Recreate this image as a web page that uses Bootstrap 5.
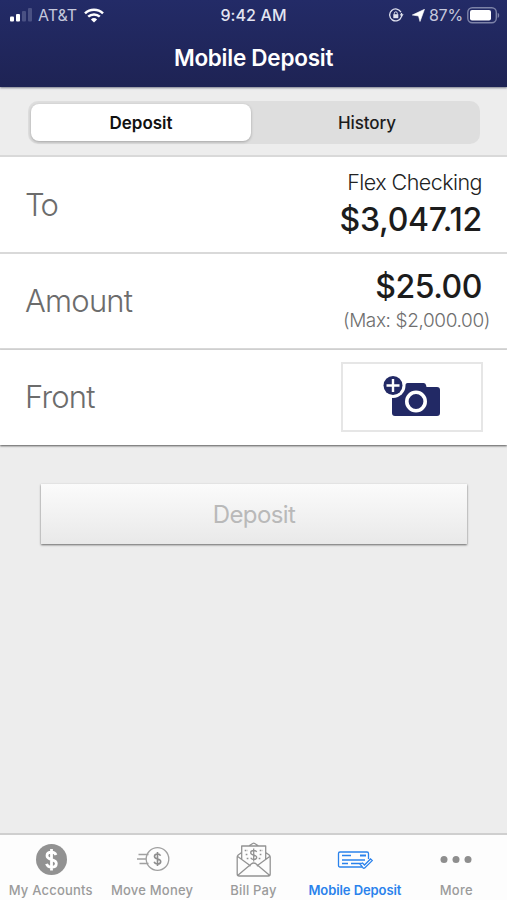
<!DOCTYPE html>
<html lang="en">
<head>
<meta charset="utf-8">
<meta name="viewport" content="width=device-width, initial-scale=1">
<title>Mobile Deposit</title>
<link rel="stylesheet" href="https://cdn.jsdelivr.net/npm/bootstrap@5.3.0/dist/css/bootstrap.min.css">
<style>
body{font-family:Inter,"Liberation Sans",sans-serif;background:#ededed;height:900px;overflow:hidden}
.app-head{height:87px;background:linear-gradient(#232b67,#1e2354);color:#fff;box-shadow:0 1px 2px #7a7d8c;z-index:1}
.status{height:30px;font-size:16px;line-height:30px;display:grid;grid-template-columns:1fr auto 1fr;padding-left:10px;padding-right:7px}
.status span{color:#c5c8dc}
.status .carrier{margin-left:5px}
.status .carrier + svg{margin-left:7px}
.status .pct{letter-spacing:-.2px}
.status .clock{color:#e4e6f2;font-weight:500;letter-spacing:.1px;margin-left:-3px}
.app-title{font-size:22.500px;line-height:56px;font-weight:600;letter-spacing:-.25px}
.seg-wrap{height:70px;padding:14px 27px 0 28px;border-bottom:2px solid #d9d9d9}
.seg{height:43px;background:#dedede;border-radius:10px;padding:3px}
.seg button{border:0;background:none;border-radius:8px;font-size:17px;line-height:38px;padding:0 0 0 6px;width:50%;color:#1c1c1c;font-weight:500;letter-spacing:-.1px}
.seg .on{background:#fff;font-weight:600;box-shadow:0 1px 3px #0004;color:#111;width:220px;padding:0;letter-spacing:0}
.form-row{height:96px;background:#fff;border-bottom:2px solid #d9d9d9;padding:0 25px}
.form-row.first{height:97px}
.form-row.final{height:95px;border-bottom:0;box-shadow:0 1px 2px #555;padding-right:24px;padding-bottom:2px}
.lbl{font-size:31px;font-weight:300;color:#6c6c6c;letter-spacing:-.8px;padding-top:1px}
.lbl.tight{letter-spacing:-1.800px}
.acct{font-size:21.500px;line-height:28px;font-weight:300;color:#222;letter-spacing:-.55px;margin-top:-2px}
.amt{font-size:32px;line-height:40px;font-weight:500;color:#1c1c1c;letter-spacing:-.25px;padding-top:4px}
.amt.entered{padding:0;margin-top:-3px;letter-spacing:-.45px}
.max{font-size:19px;line-height:24px;font-weight:300;color:#6f6f6f;margin-right:-8px;letter-spacing:-.38px;padding-top:2px}
.cam{width:142px;height:70px;border:2px solid #e6e6e6;background:#fff;padding:4px 0 0}
.cam svg{overflow:visible}
.go{margin:39px 40px 0 41px;height:60px;border:0;background:linear-gradient(#fbfbfb,#e9e9e9);box-shadow:0 1px 2px #666;color:#b9b9b9;font-size:24px;letter-spacing:-.6px;padding-top:2px}
.tabs{height:67px;background:#fdfdfd;border-top:2px solid #cfcfcf;font-size:13px;font-weight:500;color:#9b9b9b}
.tabs a{width:20%;color:inherit;text-decoration:none;white-space:nowrap;padding-top:6px;letter-spacing:.2px}
.tabs a.on{color:#2a82ec;font-weight:600;letter-spacing:-.08px}
.tabs svg{display:block;height:38px;width:40px}
.tabs span{line-height:18px;margin-top:2px}
</style>
<script src="https://cdn.jsdelivr.net/npm/bootstrap@5.3.0/dist/js/bootstrap.bundle.min.js"></script>
</head>
<body class="d-flex flex-column">
<header class="app-head position-relative flex-shrink-0">
  <div class="status">
    <div class="d-flex align-items-center">
      <svg width="23" height="14" viewBox="0 0 23 14"><g fill="#fff"><rect y="8.500" width="4" height="5" rx="1"/><rect x="6" y="6" width="4" height="7.500" rx="1"/></g><g fill="#4a5183"><rect x="12" y="3" width="4" height="10.500" rx="1"/><rect x="18" y="0" width="4" height="13.500" rx="1"/></g></svg>
      <span class="carrier">AT&amp;T</span>
      <svg width="20" height="15" viewBox="0 0 20 15"><g fill="none" stroke="#fff" stroke-width="2.500"><path d="M1 5.400C6 .6 14 .6 19 5.400"/><path d="M4.200 8.700c3.300-3 8.300-3 11.600 0"/></g><path d="M6.900 11.400Q10 8.800 13.100 11.400L10 14.600z" fill="#fff"/></svg>
    </div>
    <div class="clock">9:42 AM</div>
    <div class="d-flex align-items-center justify-content-end">
      <svg width="15" height="14" viewBox="0 0 15 14"><path d="M12 4.200A6 6 0 1 0 12.300 9M12.500 5v4" fill="none" stroke="#dfe1ee" stroke-width="1.300"/><path d="M10.800 6.200h3.800l-1.900 2.700z" fill="#dfe1ee"/><rect x="4.300" y="6.200" width="5" height="4" fill="#dfe1ee"/><path d="M5.300 6.500V5.300a1.500 1.500 0 0 1 3 0v1.200" fill="none" stroke="#dfe1ee"/></svg>
      <svg class="ms-2" width="13" height="13" viewBox="0 0 13 13"><path d="M12.500.3 8 12.500 6.500 7 .3 6z" fill="#fff" stroke="#fff" stroke-width=".6"/></svg>
      <span class="pct ms-1">87%</span>
      <svg class="ms-1" width="33" height="17" viewBox="0 0 33 17"><rect x=".8" y=".8" width="28.500" height="15" rx="4.500" fill="none" stroke="#7d83a8" stroke-width="1.400"/><rect x="3" y="3" width="21" height="10.600" rx="2" fill="#fff"/><path d="M30.700 5.800c2 .8 2 4.400 0 5.200z" fill="#7d83a8"/></svg>
    </div>
  </div>
  <div class="app-title text-center"><span>Mobile Deposit</span></div>
</header>
<main class="flex-grow-1 d-flex flex-column">
  <div class="seg-wrap"><div class="seg d-flex"><button class="on">Deposit</button><button class="flex-grow-1">History</button></div></div>
  <div class="form-row first d-flex justify-content-between align-items-center">
    <span class="lbl tight">To</span>
    <div class="text-end"><div class="acct">Flex Checking</div><div class="amt">$3,047.12</div></div>
  </div>
  <div class="form-row d-flex justify-content-between align-items-center">
    <span class="lbl">Amount</span>
    <div class="text-end"><div class="amt entered">$25.00</div><div class="max">(Max: $2,000.00)</div></div>
  </div>
  <div class="form-row final d-flex justify-content-between align-items-center">
    <span class="lbl">Front</span>
    <button class="cam d-flex align-items-center justify-content-center" aria-label="Take photo of front">
      <svg width="58" height="42" viewBox="0 0 58 42"><path d="M9 11h11l2-4q1-2 2.500-2H40.500q2 0 2.500 2l.5 2H54q3 0 3 3v23q0 3-3 3H12q-3 0-3-3z" fill="#222965"/><circle cx="10" cy="7.500" r="12.500" fill="#fff"/><circle cx="10" cy="7.500" r="9.500" fill="#222965"/><path d="M3.500 7.500h13M10 1v13" stroke="#fff" stroke-width="2.400"/><circle cx="33" cy="23.500" r="9.200" fill="none" stroke="#fff" stroke-width="3.600"/></svg>
    </button>
  </div>
  <button class="go">Deposit</button>
</main>
<nav class="tabs d-flex flex-shrink-0">
  <a class="d-flex flex-column align-items-center" href="#"><svg viewBox="0 0 40 38"><circle cx="20.500" cy="18.500" r="15.500" fill="#929292"/><path d="M25 14c-.8-2-2.300-2.800-4.500-2.800-2.600 0-4.500 1.300-4.500 3.500 0 5 9.300 2.700 9.300 7.700 0 2.500-2 3.800-4.800 3.800-2.500 0-4.200-1-5-3.300M20.500 8v21.500" fill="none" stroke="#fff" stroke-width="2.800"/></svg><span>My Accounts</span></a>
  <a class="d-flex flex-column align-items-center" href="#"><svg viewBox="0 0 40 38"><g fill="none" stroke="#a0a0a0" stroke-width="1.300"><circle cx="25.500" cy="18" r="11.300"/><path d="M6.500 13.500h10M5 18h9M7.500 22.500h9"/><path d="M28.500 14.700c-.5-1.400-1.600-1.700-3-1.700-1.700 0-3 .8-3 2.400 0 3.200 6.200 1.800 6.200 5 0 1.700-1.400 2.600-3.200 2.600-1.700 0-2.800-.7-3.300-2.200M25.500 11v14" stroke="#8d8d8d" stroke-width="1.600"/></g></svg><span>Move Money</span></a>
  <a class="d-flex flex-column align-items-center" href="#"><svg viewBox="0 0 40 38"><g transform="translate(.7 0)" fill="none" stroke="#939393" stroke-width="1.300" stroke-linejoin="round"><path d="M8 11.500 4.500 14q-1 1-1 2v17q0 2 2 2h29q2 0 2-2V16q0-1-1-2L32 11.500M15 5l4-2.500q1-.6 2 0L25 5M8 18V5h24v13M4 15.500l13 9.500M36 15.500 23 25M4.500 34l13-11q2.500-2 5 0l13 11"/><path d="M23 11c-.5-1.200-1.500-1.500-3-1.500-1.600 0-3 .8-3 2.200 0 3 6 1.600 6 4.600 0 1.500-1.400 2.200-3 2.200s-2.500-.6-3-1.700M20 7.500v13"/><path d="M11 9.500h3m-2 4h2m-1 4h2M26 9.500h3m-3 4h2m-3 4h2" stroke-dasharray="1.700 1"/></g></svg><span>Bill Pay</span></a>
  <a class="on d-flex flex-column align-items-center" href="#"><svg viewBox="0 0 40 38"><g fill="none" stroke="#2a82ec" stroke-width="1.300"><path d="M27 26H5q-1.500 0-1.500-1.500v-12Q3.500 11 5 11h27q1.500 0 1.500 1.500V18"/><path d="M7 14.500h9M7 19h23M7 22.500h6m3 0h10"/><path d="M25 14.500h6" stroke-width="2"/><path d="m25 23 2.500-1 2 2 6-6 1.700 1.600-7.500 7.400q-1 .6-1.800-.3z" fill="#fff"/></g></svg><span>Mobile Deposit</span></a>
  <a class="d-flex flex-column align-items-center" href="#"><svg viewBox="0 0 40 38"><g fill="#8e8e8e"><circle cx="8" cy="18.500" r="3.500"/><circle cx="20" cy="18.500" r="3.500"/><circle cx="32" cy="18.500" r="3.500"/></g></svg><span>More</span></a>
</nav>
</body>
</html>
